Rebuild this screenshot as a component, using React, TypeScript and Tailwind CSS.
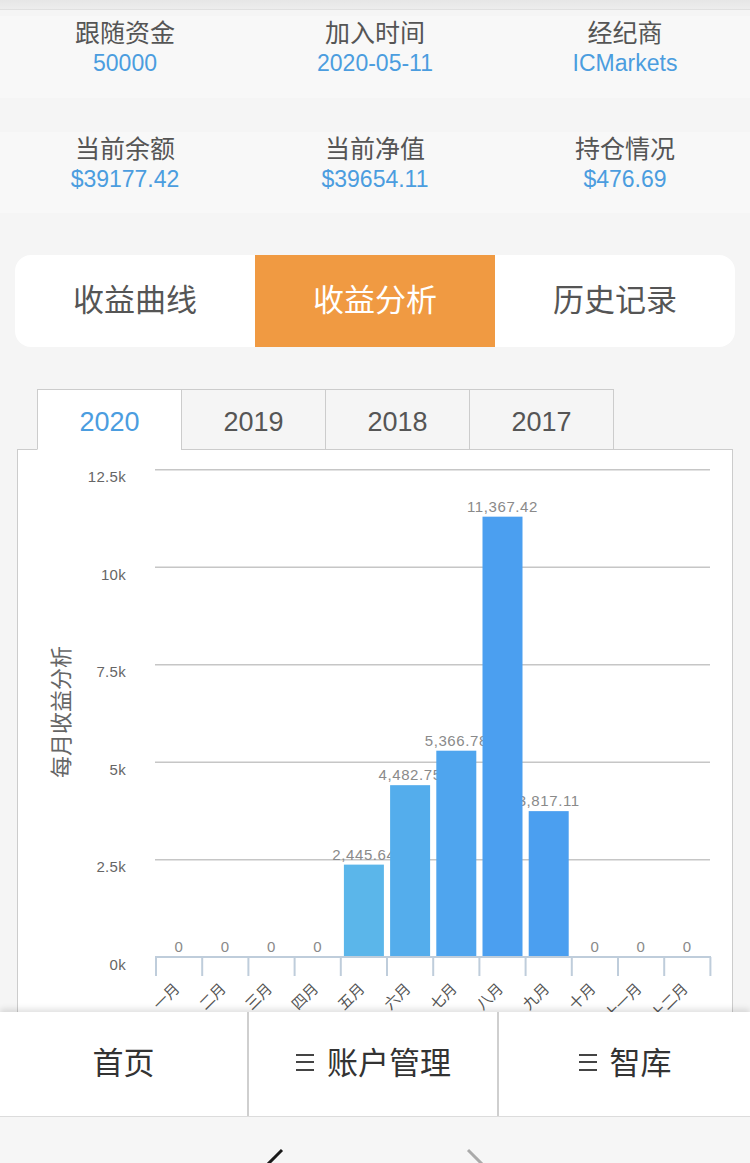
import React from "react";

const FONT = "font-['Liberation_Sans','Noto_Sans_CJK_SC',sans-serif]";

const info = [
  [
    { label: "跟随资金", value: "50000" },
    { label: "加入时间", value: "2020-05-11" },
    { label: "经纪商", value: "ICMarkets" },
  ],
  [
    { label: "当前余额", value: "$39177.42" },
    { label: "当前净值", value: "$39654.11" },
    { label: "持仓情况", value: "$476.69" },
  ],
];

const months = ["一月", "二月", "三月", "四月", "五月", "六月", "七月", "八月", "九月", "十月", "十一月", "十二月"];
const values = [0, 0, 0, 0, 2445.64, 4482.75, 5366.78, 11367.42, 3817.11, 0, 0, 0];
const labels = ["0", "0", "0", "0", "2,445.64", "4,482.75", "5,366.78", "11,367.42", "3,817.11", "0", "0", "0"];
const colors = ["#5bb6ea", "#5bb6ea", "#5bb6ea", "#5bb6ea", "#5bb6ea", "#54adec", "#4fa5ee", "#4b9ff0", "#4b9ff0", "#4b9ff0", "#4b9ff0", "#4b9ff0"];

const X0 = 156;
const STEP = 46.2;
const AXIS_Y = 958;
const TOP_Y = 470.7;
const GRID = 97.5;

function Chart() {
  const yTicks = ["12.5k", "10k", "7.5k", "5k", "2.5k", "0k"];
  return (
    <svg width={714} height={600} viewBox="18 451 714 600" className="block">
      {[0, 1, 2, 3, 4].map((k) => (
        <line key={k} x1={155} x2={710} y1={TOP_Y + GRID * k} y2={TOP_Y + GRID * k} stroke="#c6c6c6" strokeWidth={1.5} />
      ))}
      {yTicks.map((t, k) => (
        <text
          key={t}
          x={126}
          y={(k === 5 ? AXIS_Y : TOP_Y + GRID * k) + 7}
          textAnchor="end"
          dominantBaseline="central"
          fontSize={15}
          letterSpacing={0.3}
          fill="#666"
          fontFamily="Liberation Sans, sans-serif"
        >
          {t}
        </text>
      ))}
      <text
        x={0}
        y={0}
        transform="translate(59 713) rotate(-90)"
        textAnchor="middle"
        dominantBaseline="central"
        fontSize={22}
        fill="#666"
        fontFamily="Noto Sans CJK SC, sans-serif"
      >
        每月收益分析
      </text>
      {values.map((v, i) => {
        const cx = X0 + STEP * (i + 0.5);
        const top = v > 0 ? 961 - v * 0.039 : AXIS_Y;
        return (
          <text
            key={"l" + i}
            x={cx}
            y={top - 5}
            textAnchor="middle"
            fontSize={15}
            letterSpacing={0.6}
            fill="#8a8a8a"
            fontFamily="Liberation Sans, sans-serif"
          >
            {labels[i]}
          </text>
        );
      })}
      {values.map((v, i) => {
        if (v <= 0) return null;
        const cx = X0 + STEP * (i + 0.5);
        const top = 961 - v * 0.039;
        return <rect key={"b" + i} x={cx - 20} y={top} width={40} height={AXIS_Y - top} fill={colors[i]} />;
      })}
      <line x1={155} x2={711} y1={AXIS_Y} y2={AXIS_Y} stroke="#bfcddb" strokeWidth={2} />
      {Array.from({ length: 13 }).map((_, i) => (
        <line key={"t" + i} x1={X0 + STEP * i} x2={X0 + STEP * i} y1={AXIS_Y} y2={977} stroke="#bfcddb" strokeWidth={2} />
      ))}
      {months.map((m, i) => {
        const cx = X0 + STEP * (i + 0.5);
        return (
          <text
            key={m}
            x={0}
            y={0}
            transform={`translate(${cx - 3} ${986}) rotate(-45)`}
            textAnchor="end"
            dominantBaseline="central"
            fontSize={15}
            fill="#555"
            fontFamily="Noto Sans CJK SC, sans-serif"
          >
            {m}
          </text>
        );
      })}
    </svg>
  );
}

function MenuIcon() {
  return (
    <svg width={20} height={20} viewBox="0 0 20 20" className="block">
      <line x1={1} x2={19} y1={3} y2={3} stroke="#444" strokeWidth={2} />
      <line x1={1} x2={19} y1={10} y2={10} stroke="#444" strokeWidth={2} />
      <line x1={1} x2={19} y1={18} y2={18} stroke="#444" strokeWidth={2} />
    </svg>
  );
}

export default function App() {
  const years = ["2020", "2019", "2018", "2017"];
  return (
    <div className={`relative w-[750px] h-[1163px] overflow-hidden bg-[#f5f5f5] ${FONT}`}>
      <div className="h-[10px] bg-gradient-to-b from-[#e6e6e6] to-[#ededed] border-b border-[#e0e0e0]" />

      <div className="flex flex-col gap-[22px]">
        {info.map((row, r) => (
          <div key={r} className={`grid grid-cols-3 ${r === 0 ? "h-[88px] pt-[6px]" : "h-[93px] pt-[12px]"}`}>
            {row.map((c) => (
              <div key={c.label} className="flex flex-col items-center bg-[#f8f8f8]">
                <div className="text-[25px] leading-[31px] text-[#555] font-['Noto_Sans_CJK_SC',sans-serif]">{c.label}</div>
                <div className="text-[23px] leading-[33px] text-[#4b9ddf] font-['Liberation_Sans',sans-serif]">{c.value}</div>
              </div>
            ))}
          </div>
        ))}
      </div>

      <div className="mt-[42px] mx-[15px] h-[92px] rounded-[16px] bg-white overflow-hidden flex font-['Noto_Sans_CJK_SC',sans-serif]">
        <div className="flex-1 flex items-center justify-center pb-[5px] text-[31px] text-[#555]">收益曲线</div>
        <div className="flex-1 flex items-center justify-center pb-[5px] text-[31px] text-white bg-[#f09a42]">收益分析</div>
        <div className="flex-1 flex items-center justify-center pb-[5px] text-[31px] text-[#555]">历史记录</div>
      </div>

      <div className="mt-[42px] mx-[17px]">
        <div className="relative z-10 flex pl-[20px] -mb-px">
          {years.map((y, i) => (
            <div
              key={y}
              className={`w-[145px] h-[61px] flex items-center justify-center pt-[5px] text-[27px] border border-[#cccccc] ${
                i > 0 ? "-ml-px" : ""
              } ${i === 0 ? "bg-white text-[#4b9ddf] border-b-white" : "bg-[#f5f5f5] text-[#555]"}`}
            >
              {y}
            </div>
          ))}
        </div>
        <div className="h-[640px] bg-white border border-[#cccccc]">
          <Chart />
        </div>
      </div>

      <div className="absolute left-0 top-[1012px] w-[750px] h-[104px] bg-white shadow-[0_-3px_6px_rgba(0,0,0,0.12)] grid grid-cols-[249px_250px_251px] font-['Noto_Sans_CJK_SC',sans-serif] text-[31px] text-[#333]">
        <div className="flex items-center justify-center pb-[5px] border-r-2 border-[#cfcfcf]">首页</div>
        <div className="flex items-center justify-center pb-[5px] gap-[12px] border-r-2 border-[#cfcfcf]">
          <MenuIcon />
          <span>账户管理</span>
        </div>
        <div className="flex items-center justify-center pb-[5px] gap-[12px]">
          <MenuIcon />
          <span>智库</span>
        </div>
      </div>

      <div className="absolute left-0 top-[1116px] w-[750px] h-[47px] bg-[#f6f6f6] border-t border-[#dcdcdc]">
        <svg width={750} height={47} className="block">
          <line x1={282} y1={33} x2={266} y2={49} stroke="#1a1a1a" strokeWidth={3} />
          <line x1={468} y1={33} x2={484} y2={49} stroke="#aaaaaa" strokeWidth={3} />
        </svg>
      </div>
    </div>
  );
}
